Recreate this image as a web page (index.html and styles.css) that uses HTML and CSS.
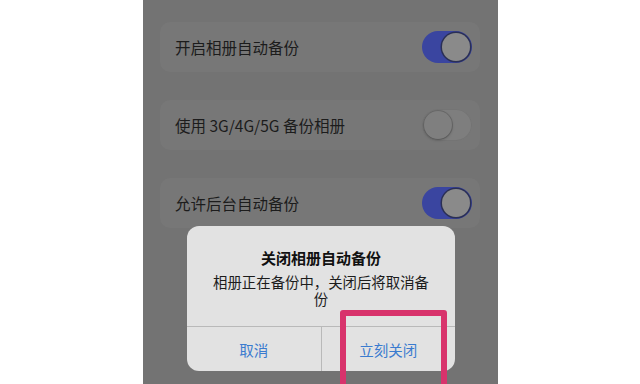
FILE: index.html
```html
<!DOCTYPE html>
<html lang="zh-CN">
<head>
  <meta charset="UTF-8">
  <title>相册备份设置</title>
  <link rel="stylesheet" href="styles.css">
</head>
<body>
  <div class="phone">
    <div class="list">
      <div class="row">
        <span class="label">开启相册自动备份</span>
        <span class="switch on"></span>
      </div>
      <div class="row">
        <span class="label">使用 3G/4G/5G 备份相册</span>
        <span class="switch"></span>
      </div>
      <div class="row">
        <span class="label">允许后台自动备份</span>
        <span class="switch on"></span>
      </div>
    </div>

    <div class="dialog">
      <div class="dialog-body">
        <div class="dialog-title">关闭相册自动备份</div>
        <div class="dialog-text">相册正在备份中，关闭后将取消备份</div>
      </div>
      <div class="dialog-actions">
        <button class="action">取消</button>
        <button class="action">立刻关闭</button>
      </div>
    </div>

    <div class="highlight"></div>
  </div>
</body>
</html>
```

FILE: styles.css
```css
html {
  box-sizing: border-box;
}

*, *:before, *:after {
  box-sizing: inherit;
}

body {
  margin: 0;
  height: 384px;
  overflow: hidden;
  background: #fff;
  display: flex;
  justify-content: center;
  font-family: "Noto Sans CJK SC", "Noto Sans", sans-serif;
}

.phone {
  position: relative;
  width: 355px;
  height: 384px;
  margin-left: 1px;
  background: #737373;
  padding: 22px 18px 0 17px;
}

.list {
  display: flex;
  flex-direction: column;
  gap: 28px;
}

.row {
  height: 50px;
  display: flex;
  align-items: center;
  justify-content: space-between;
  padding: 0 8px 0 15px;
  background: #777;
  border-radius: 10px;
}

.label {
  font-size: 15.5px;
  color: #1c1c1c;
}

.switch {
  position: relative;
  width: 50px;
  height: 32px;
  border-radius: 16px;
  background: #7e7e7e;
  box-shadow: inset 0 0 0 1px #747474;
}

.switch:after {
  content: "";
  position: absolute;
  top: 2px;
  left: 2px;
  width: 28px;
  height: 28px;
  border-radius: 50%;
  background: #7f7f7f;
  box-shadow: 0 1px 3px rgba(0,0,0,0.25), 0 0 0 1px #6c6c6c;
}

.switch.on {
  background: #3a45a0;
  box-shadow: none;
}

.switch.on:after {
  left: auto;
  right: 2px;
  background: #8a8a8a;
  box-shadow: 0 0 0 1.5px #2a2f55;
}

.dialog {
  position: absolute;
  left: 44px;
  top: 226px;
  width: 268px;
  background: #e2e2e2;
  border-radius: 12px;
  overflow: hidden;
}

.dialog-body {
  padding: 21px 22px 19px;
  text-align: center;
}

.dialog-title {
  font-size: 15px;
  font-weight: 700;
  line-height: 22px;
  color: #111;
}

.dialog-text {
  margin-top: 4px;
  font-size: 14.4px;
  line-height: 17px;
  color: #1c1c1c;
}

.dialog-actions {
  display: flex;
  border-top: 1px solid #b9b9b9;
}

.action {
  flex: 1;
  height: 44px;
  padding: 0;
  border: 0;
  background: none;
  font-family: inherit;
  font-size: 14.5px;
  color: #3a7bcf;
}

.action + .action {
  border-left: 1px solid #b9b9b9;
}

.highlight {
  position: absolute;
  left: 197px;
  top: 310px;
  width: 107px;
  height: 84px;
  border: 6px solid #d8336c;
  border-radius: 3px;
}
```
